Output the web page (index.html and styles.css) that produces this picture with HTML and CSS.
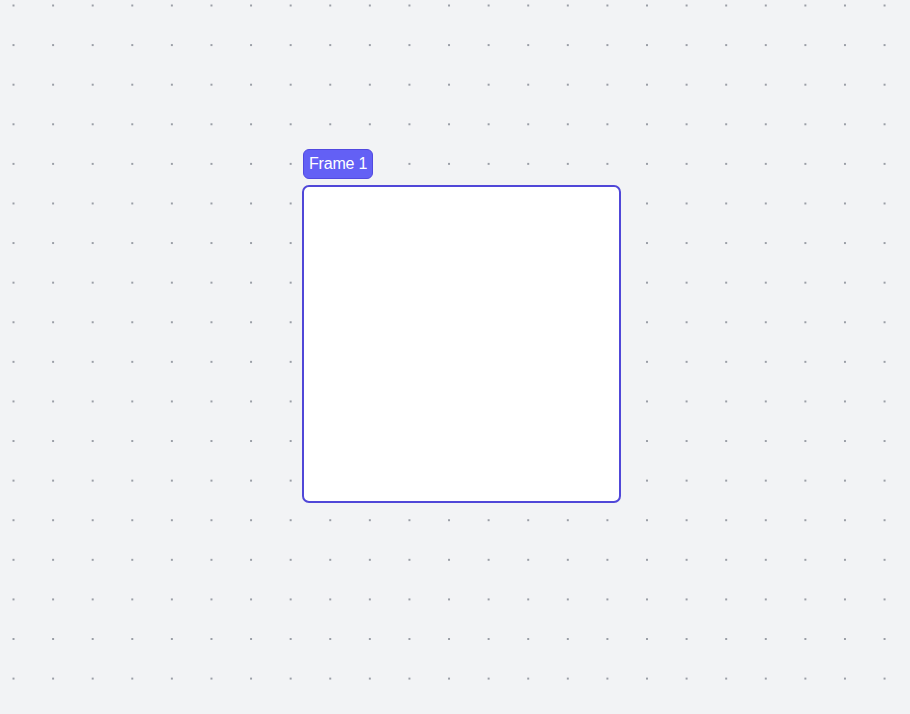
FILE: index.html
```html
<!DOCTYPE html>
<html>
<head>
<meta charset="utf-8">
<link rel="stylesheet" href="styles.css">
</head>
<body>
<div class="canvas">
  <div class="frame-node">
    <div class="frame-label">Frame 1</div>
    <div class="frame-box"></div>
  </div>
</div>
</body>
</html>
```
FILE: styles.css
```css
html, body {
  margin: 0;
  padding: 0;
  width: 100%;
  height: 100%;
  overflow: hidden;
}
body {
  background-color: #f2f3f5;
  font-family: "Liberation Sans", Arial, sans-serif;
}
.canvas {
  position: relative;
  width: 910px;
  height: 714px;
  background-image: radial-gradient(circle, #9a9ea6 0.9px, transparent 1.2px);
  background-size: 39.6px 39.6px;
  background-position: -6.3px -14.3px;
}
.frame-node {
  position: absolute;
  left: 302px;
  top: 149px;
  display: flex;
  flex-direction: column;
  align-items: flex-start;
  gap: 6px;
}
.frame-label {
  box-sizing: border-box;
  height: 30px;
  padding: 0 5px;
  display: flex;
  align-items: center;
  background: #6360f5;
  border: 1px solid #5149e0;
  border-radius: 6px;
  color: #ffffff;
  font-size: 16px;
  letter-spacing: -0.2px;
  margin-left: 1px;
}
.frame-box {
  box-sizing: border-box;
  width: 319px;
  height: 318px;
  background: #ffffff;
  border: 2px solid #5047d8;
  border-radius: 7px;
}
```
